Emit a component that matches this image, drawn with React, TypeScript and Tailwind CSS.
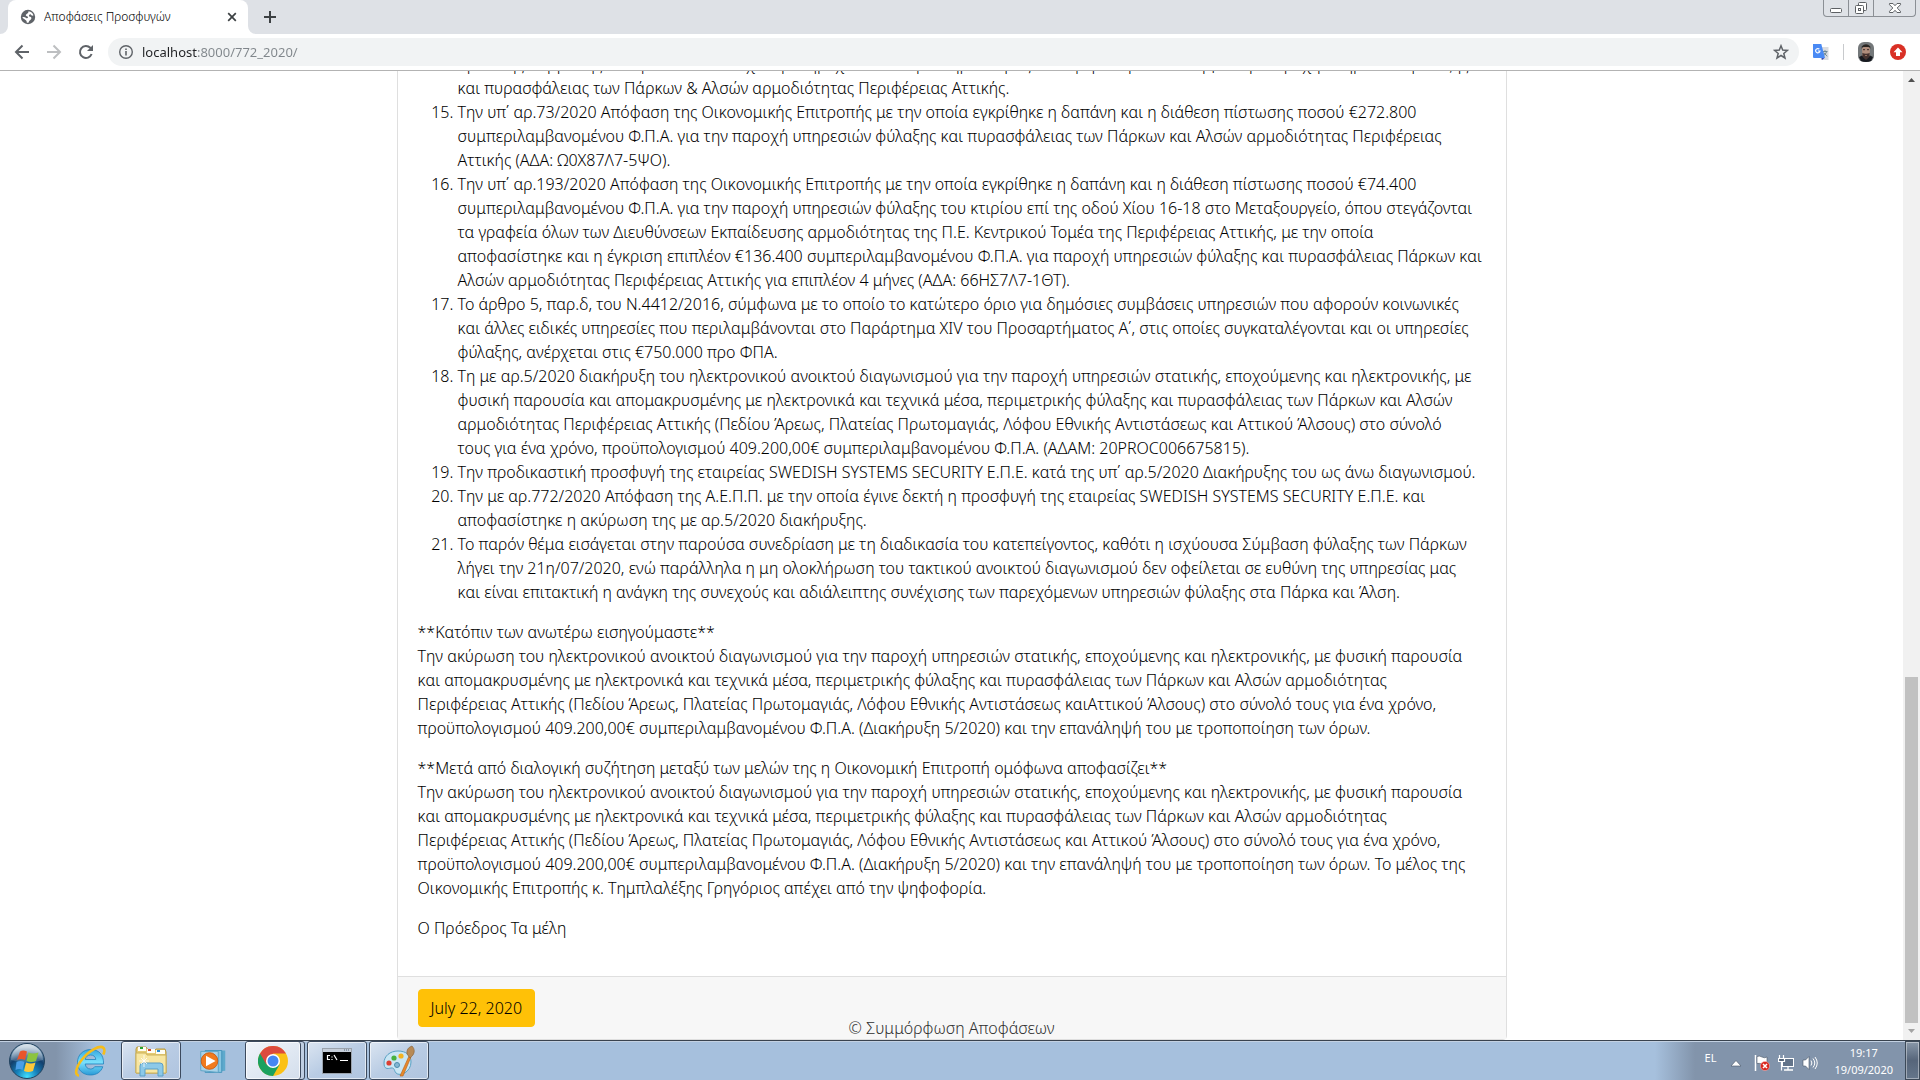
import type { ReactNode } from 'react';

const items: { n: number; text: string }[] = [
  {
    n: 14,
    text: 'όρων της σύμβασης των φυλάκων που έχει προκηρυχθεί από την υπηρεσία μας και αφορά την ανάθεση για την παροχή υπηρεσιών φύλαξης\nκαι πυρασφάλειας των Πάρκων & Αλσών αρμοδιότητας Περιφέρειας Αττικής.',
  },
  {
    n: 15,
    text: 'Την υπ΄ αρ.73/2020 Απόφαση της Οικονομικής Επιτροπής με την οποία εγκρίθηκε η δαπάνη και η διάθεση πίστωσης ποσού €272.800\nσυμπεριλαμβανομένου Φ.Π.Α. για την παροχή υπηρεσιών φύλαξης και πυρασφάλειας των Πάρκων και Αλσών αρμοδιότητας Περιφέρειας\nΑττικής (ΑΔΑ: Ω0Χ87Λ7-5ΨΟ).',
  },
  {
    n: 16,
    text: 'Την υπ΄ αρ.193/2020 Απόφαση της Οικονομικής Επιτροπής με την οποία εγκρίθηκε η δαπάνη και η διάθεση πίστωσης ποσού €74.400\nσυμπεριλαμβανομένου Φ.Π.Α. για την παροχή υπηρεσιών φύλαξης του κτιρίου επί της οδού Χίου 16-18 στο Μεταξουργείο, όπου στεγάζονται\nτα γραφεία όλων των Διευθύνσεων Εκπαίδευσης αρμοδιότητας της Π.Ε. Κεντρικού Τομέα της Περιφέρειας Αττικής, με την οποία\nαποφασίστηκε και η έγκριση επιπλέον €136.400 συμπεριλαμβανομένου Φ.Π.Α. για παροχή υπηρεσιών φύλαξης και πυρασφάλειας Πάρκων και\nΑλσών αρμοδιότητας Περιφέρειας Αττικής για επιπλέον 4 μήνες (ΑΔΑ: 66ΗΣ7Λ7-1ΘΤ).',
  },
  {
    n: 17,
    text: 'Το άρθρο 5, παρ.δ, του Ν.4412/2016, σύμφωνα με το οποίο το κατώτερο όριο για δημόσιες συμβάσεις υπηρεσιών που αφορούν κοινωνικές\nκαι άλλες ειδικές υπηρεσίες που περιλαμβάνονται στο Παράρτημα XIV του Προσαρτήματος Α΄, στις οποίες συγκαταλέγονται και οι υπηρεσίες\nφύλαξης, ανέρχεται στις €750.000 προ ΦΠΑ.',
  },
  {
    n: 18,
    text: 'Τη με αρ.5/2020 διακήρυξη του ηλεκτρονικού ανοικτού διαγωνισμού για την παροχή υπηρεσιών στατικής, εποχούμενης και ηλεκτρονικής, με\nφυσική παρουσία και απομακρυσμένης με ηλεκτρονικά και τεχνικά μέσα, περιμετρικής φύλαξης και πυρασφάλειας των Πάρκων και Αλσών\nαρμοδιότητας Περιφέρειας Αττικής (Πεδίου Άρεως, Πλατείας Πρωτομαγιάς, Λόφου Εθνικής Αντιστάσεως και Αττικού Άλσους) στο σύνολό\nτους για ένα χρόνο, προϋπολογισμού 409.200,00€ συμπεριλαμβανομένου Φ.Π.Α. (ΑΔΑΜ: 20PROC006675815).',
  },
  {
    n: 19,
    text: 'Την προδικαστική προσφυγή της εταιρείας SWEDISH SYSTEMS SECURITY Ε.Π.Ε. κατά της υπ΄ αρ.5/2020 Διακήρυξης του ως άνω διαγωνισμού.',
  },
  {
    n: 20,
    text: 'Την με αρ.772/2020 Απόφαση της Α.Ε.Π.Π. με την οποία έγινε δεκτή η προσφυγή της εταιρείας SWEDISH SYSTEMS SECURITY Ε.Π.Ε. και\nαποφασίστηκε η ακύρωση της με αρ.5/2020 διακήρυξης.',
  },
  {
    n: 21,
    text: 'Το παρόν θέμα εισάγεται στην παρούσα συνεδρίαση με τη διαδικασία του κατεπείγοντος, καθότι η ισχύουσα Σύμβαση φύλαξης των Πάρκων\nλήγει την 21η/07/2020, ενώ παράλληλα η μη ολοκλήρωση του τακτικού ανοικτού διαγωνισμού δεν οφείλεται σε ευθύνη της υπηρεσίας μας\nκαι είναι επιτακτική η ανάγκη της συνεχούς και αδιάλειπτης συνέχισης των παρεχόμενων υπηρεσιών φύλαξης στα Πάρκα και Άλση.',
  },
];

const paragraphs: string[] = [
  '**Κατόπιν των ανωτέρω εισηγούμαστε**\nΤην ακύρωση του ηλεκτρονικού ανοικτού διαγωνισμού για την παροχή υπηρεσιών στατικής, εποχούμενης και ηλεκτρονικής, με φυσική παρουσία\nκαι απομακρυσμένης με ηλεκτρονικά και τεχνικά μέσα, περιμετρικής φύλαξης και πυρασφάλειας των Πάρκων και Αλσών αρμοδιότητας\nΠεριφέρειας Αττικής (Πεδίου Άρεως, Πλατείας Πρωτομαγιάς, Λόφου Εθνικής Αντιστάσεως καιΑττικού Άλσους) στο σύνολό τους για ένα χρόνο,\nπροϋπολογισμού 409.200,00€ συμπεριλαμβανομένου Φ.Π.Α. (Διακήρυξη 5/2020) και την επανάληψή του με τροποποίηση των όρων.',
  '**Μετά από διαλογική συζήτηση μεταξύ των μελών της η Οικονομική Επιτροπή ομόφωνα αποφασίζει**\nΤην ακύρωση του ηλεκτρονικού ανοικτού διαγωνισμού για την παροχή υπηρεσιών στατικής, εποχούμενης και ηλεκτρονικής, με φυσική παρουσία\nκαι απομακρυσμένης με ηλεκτρονικά και τεχνικά μέσα, περιμετρικής φύλαξης και πυρασφάλειας των Πάρκων και Αλσών αρμοδιότητας\nΠεριφέρειας Αττικής (Πεδίου Άρεως, Πλατείας Πρωτομαγιάς, Λόφου Εθνικής Αντιστάσεως και Αττικού Άλσους) στο σύνολό τους για ένα χρόνο,\nπροϋπολογισμού 409.200,00€ συμπεριλαμβανομένου Φ.Π.Α. (Διακήρυξη 5/2020) και την επανάληψή του με τροποποίηση των όρων. Το μέλος της\nΟικονομικής Επιτροπής κ. Τημπλαλέξης Γρηγόριος απέχει από την ψηφοφορία.',
  'Ο Πρόεδρος Τα μέλη',
];

function TabStrip() {
  return (
    <div className="flex h-[34px] shrink-0 items-start justify-between bg-[#dee1e6]">
      <div className="flex h-full items-center">
        <svg className="h-2 w-2 self-end" viewBox="0 0 8 8" aria-hidden="true">
          <path d="M8 0v8H0a8 8 0 0 0 8-8z" fill="#fff" />
        </svg>
        <div className="flex h-full w-60 items-center rounded-t-lg bg-white pr-2 pl-3">
          <svg className="h-4 w-4 shrink-0" viewBox="0 0 16 16" aria-hidden="true">
            <circle cx="8" cy="8" r="7.2" fill="#5f6368" />
            <path d="M8.500 2.300c2.500.2 4.300 1.700 5 4-.9.900-2.200.3-2.600-.5-.4-.7-1.200-.5-1.700.1-.6.8-.1 1.600.8 1.800 1.500.2 1.800 1.500 1 2.600-.8 1.200-2 1.100-2.300 3-.1.600-1.200.6-2 .3.100-1.300-.2-2.200-1.200-2.700C4.200 10.300 3 9.600 2.300 8.300c1.200-.4 2.700-.3 3.500.4.900.8 2 .6 2.200-.3.200-1-.8-1-1.700-1.500-.9-.6-.5-1.500.4-2 .9-.4 1.900-1.300 1.800-2.600z" fill="#fff" />
          </svg>
          <h1 className="ml-2 grow truncate text-xs font-light text-black">Αποφάσεις Προσφυγών</h1>
          <button type="button" aria-label="Close tab" className="grid h-4 w-4 place-items-center">
            <svg className="h-2.5 w-2.5" viewBox="0 0 10 10" aria-hidden="true">
              <path d="M1.200 1.200l7.600 7.600M8.800 1.200L1.200 8.800" stroke="#3c4043" strokeWidth="1.700" />
            </svg>
          </button>
        </div>
        <svg className="h-2 w-2 self-end" viewBox="0 0 8 8" aria-hidden="true">
          <path d="M0 0v8h8a8 8 0 0 1-8-8z" fill="#fff" />
        </svg>
        <button type="button" aria-label="New tab" className="ml-1.5 grid h-4 w-4 place-items-center">
          <svg className="h-3 w-3" viewBox="0 0 12 12" aria-hidden="true">
            <path d="M6 0v12M0 6h12" stroke="#3c4043" strokeWidth="2" />
          </svg>
        </button>
      </div>
      <div className="mr-1 flex h-[17px] divide-x divide-[#8b8f95] rounded-b border border-t-0 border-[#8b8f95] bg-[#dfe2e7]">
        <button type="button" aria-label="Minimize" className="grid w-[25px] place-items-center">
          <svg className="h-4 w-4" viewBox="0 0 16 16" aria-hidden="true">
            <rect x="2.500" y="8.500" width="11" height="4" rx="1" fill="#fff" stroke="#5d6064" />
          </svg>
        </button>
        <button type="button" aria-label="Restore" className="grid w-[25px] place-items-center">
          <svg className="h-4 w-4" viewBox="0 0 16 16" fill="#fff" stroke="#5d6064" aria-hidden="true">
            <rect x="5.500" y="2.500" width="8" height="8" rx="1" />
            <rect x="2.500" y="5.500" width="8" height="8" rx="1" />
            <rect x="5.500" y="8.500" width="2" height="2" />
          </svg>
        </button>
        <button type="button" aria-label="Close" className="grid w-[41px] place-items-center">
          <svg className="h-4 w-4" viewBox="0 0 16 16" aria-hidden="true">
            <path d="M2.500 3.500h3.500l2 2.200 2-2.200h3.500v1.200L10.200 8l3.300 3.300v1.200H10l-2-2.200-2 2.200H2.500v-1.200L5.800 8 2.500 4.700z" fill="#fff" stroke="#5d6064" />
          </svg>
        </button>
      </div>
    </div>
  );
}

function ToolButton({ label, children }: { label: string; children: ReactNode }) {
  return (
    <button type="button" aria-label={label} className="grid h-4 w-4 shrink-0 place-items-center">
      {children}
    </button>
  );
}

function Toolbar() {
  return (
    <div className="flex h-[37px] shrink-0 items-center border-b border-[#b3b3b3] bg-white px-3.5">
      <div className="flex gap-4">
        <ToolButton label="Back">
          <svg className="h-4 w-4" viewBox="0 0 16 16" fill="none" stroke="#5f6368" strokeWidth="2" aria-hidden="true">
            <path d="M15 8H2.500M8.500 1.500L2 8l6.500 6.500" />
          </svg>
        </ToolButton>
        <ToolButton label="Forward">
          <svg className="h-4 w-4" viewBox="0 0 16 16" fill="none" stroke="#bdbfc1" strokeWidth="2" aria-hidden="true">
            <path d="M1 8h12.500M7.500 1.500L14 8l-6.500 6.500" />
          </svg>
        </ToolButton>
        <ToolButton label="Reload">
          <svg className="h-4 w-4" viewBox="0 0 16 16" aria-hidden="true">
            <path d="M13.600 10A6 6 0 1 1 12.300 3.800L14 5.500" fill="none" stroke="#5f6368" strokeWidth="2" />
            <path d="M15 1v6H9z" fill="#5f6368" />
          </svg>
        </ToolButton>
      </div>
      <div className="ml-3.5 flex h-7 grow items-center rounded-full bg-[#f1f3f4] px-2.5">
        <ToolButton label="Site information">
          <svg className="h-4 w-4" viewBox="0 0 16 16" aria-hidden="true">
            <circle cx="8" cy="8" r="6.300" fill="none" stroke="#5f6368" strokeWidth="1.400" />
            <path d="M7.200 7h1.600v4.500H7.200zM7.200 4.500h1.600V6H7.200z" fill="#5f6368" />
          </svg>
        </ToolButton>
        <input
          type="text"
          aria-label="Address"
          defaultValue="localhost:8000/772_2020/"
          className="ml-2 min-w-0 grow bg-[linear-gradient(to_right,#202124_55px,#80868b_55px)] bg-clip-text text-[13px] leading-5 text-transparent outline-none"
        />
        <ToolButton label="Bookmark this page">
          <svg className="h-4 w-4" viewBox="0 0 16 16" aria-hidden="true">
            <path d="M8 1.800l1.700 4.300 4.700.3-3.600 3 1.200 4.600L8 11.500 4 14l1.200-4.600-3.600-3 4.700-.3z" fill="none" stroke="#5f6368" strokeWidth="1.500" />
          </svg>
        </ToolButton>
      </div>
      <div className="ml-3.5 flex items-center">
        <ToolButton label="Translate">
          <svg className="h-4 w-4" viewBox="0 0 16 16" aria-hidden="true">
            <path d="M6 3h9.500v13H8z" fill="#dadce0" />
            <path d="M9.500 7.500h5M12 6.200v1.300M13.500 7.700c-.5 2-2 3.300-3.300 4M10.700 8.500l3.500 3.800" stroke="#6e8a96" fill="none" />
            <path d="M8.500 14h3L9 16z" fill="#3747b5" />
            <path d="M0 0h8.300L12 14H1a1 1 0 0 1-1-1z" fill="#4a8af4" />
            <path d="M6.400 5.200A2.200 2.200 0 1 0 7 7H4.900" fill="none" stroke="#fff" strokeWidth="1.200" />
          </svg>
        </ToolButton>
        <div className="mx-3.5 h-4 w-px bg-[#c8cacd]" />
        <button type="button" aria-label="Profile" className="h-5 w-4">
          <svg className="h-5 w-4" viewBox="0 0 16 20" aria-hidden="true">
            <rect width="16" height="20" rx="6" fill="#74787a" />
            <path d="M1 15l4-2h6l4 2-2 4q-5 2-10 0z" fill="#171a20" />
            <path d="M4 6q4-3 8 0l-.5 8L8 17l-3.500-3z" fill="#b08d7c" />
            <path d="M3.700 7V4.500Q8 0 12.300 4.500V7l-1-2h-6.600z" fill="#292522" />
            <path d="M4.300 11q3.700 1.500 7.400 0l-.5 4L8 18l-3.200-3z" fill="#45322f" />
            <path d="M5 7.700h2M9 7.700h2" stroke="#382b28" />
            <path d="M7 13.500h2" stroke="#96705f" />
          </svg>
        </button>
        <button type="button" aria-label="Update available" className="ml-4 h-4 w-4">
          <svg className="h-4 w-4" viewBox="0 0 16 16" aria-hidden="true">
            <circle cx="8" cy="8" r="8" fill="#d93025" />
            <path d="M8 3.500l4.500 4.700H10V12H6V8.200H3.500z" fill="#fff" />
          </svg>
        </button>
      </div>
    </div>
  );
}

function Scrollbar() {
  return (
    <div className="flex w-[17px] shrink-0 flex-col items-center bg-[#f1f1f1]">
      <svg className="h-[17px] w-[17px] shrink-0" viewBox="0 0 17 17" aria-hidden="true">
        <path d="M5 11h7L8.500 7z" fill="#505050" />
      </svg>
      <div className="flex w-[13px] grow flex-col justify-end">
        <div className="h-[37%] bg-[#c1c1c1]" />
      </div>
      <svg className="h-[17px] w-[17px] shrink-0" viewBox="0 0 17 17" aria-hidden="true">
        <path d="M5 6h7l-3.500 4z" fill="#a3a3a3" />
      </svg>
    </div>
  );
}

function Page() {
  return (
    <div className="relative flex min-w-0 grow flex-col justify-end overflow-hidden">
      <article className="mx-auto w-full max-w-[1110px] rounded-b border border-[#dfdfdf] bg-white text-base leading-6 font-light text-black">
        <div className="p-5">
          <ol className="mb-4 list-decimal pl-10">
            {items.map((item) => (
              <li key={item.n} value={item.n} className="whitespace-pre-line">
                {item.text}
              </li>
            ))}
          </ol>
          {paragraphs.map((text) => (
            <p key={text} className="mb-4 whitespace-pre-line">
              {text}
            </p>
          ))}
        </div>
        <div className="border-t border-[#dfdfdf] bg-[#f7f7f7] px-5 py-3">
          <a href="#date" className="inline-block rounded border border-[#ffc107] bg-[#ffc107] px-3 py-1.5 align-top">
            July 22, 2020
          </a>
        </div>
      </article>
      <footer className="absolute inset-x-0 bottom-0 text-center leading-6 font-light text-[#303030]">
        © Συμμόρφωση Αποφάσεων
      </footer>
    </div>
  );
}

function TaskButton({ label, active, children }: { label: string; active?: boolean; children: ReactNode }) {
  return (
    <button
      type="button"
      aria-label={label}
      className={
        active
          ? 'grid h-full w-[55px] place-items-center rounded-[3px] border-r border-[#3c4a5e] bg-linear-to-br from-[#f0f4fa] to-[#d3deec] inset-ring inset-ring-white/70'
          : 'grid h-full w-[60px] place-items-center rounded-[3px] border border-[#3c4a5e] bg-linear-to-br from-[#dbe5f1] via-[#b9cce4] to-[#afc4df] inset-ring inset-ring-white/60'
      }
    >
      {children}
    </button>
  );
}

function Taskbar() {
  return (
    <div className="flex h-10 shrink-0 border-t border-[#39434f] bg-[linear-gradient(to_right,#8294ab_56px,#a6c0dd_96px,#a6c0dd_calc(100%-265px),#8294ab_calc(100%-225px))] inset-shadow-[0_1px_0_#c3d1e2]">
      <button type="button" aria-label="Start" className="ml-2 h-full w-[38px]">
        <svg className="h-[38px] w-[38px]" viewBox="0 0 38 38" aria-hidden="true">
          <defs>
            <radialGradient id="orb" cx="50%" cy="95%" r="85%">
              <stop offset="0" stopColor="#41e0ff" />
              <stop offset=".35" stopColor="#1682bb" />
              <stop offset=".7" stopColor="#123f6d" />
              <stop offset="1" stopColor="#6e94b3" />
            </radialGradient>
            <linearGradient id="orbShine" x1="0" y1="0" x2="0" y2="1">
              <stop offset="0" stopColor="#fff" stopOpacity=".75" />
              <stop offset="1" stopColor="#fff" stopOpacity=".12" />
            </linearGradient>
          </defs>
          <circle cx="19" cy="19" r="17.500" fill="url(#orb)" stroke="#22435f" />
          <path d="M3 18a16 16 0 0 1 32 0q-16 5-32 0z" fill="url(#orbShine)" />
          <path d="M12 9.500q3-2 7 0l-2 8.500q-4-2-8 0z" fill="#e9552b" />
          <path d="M20.500 10.500q4 2 10 0l-2.500 8.500q-5 2-9.500 0z" fill="#8cc43f" />
          <path d="M8.500 20q4-2 8 0l-2 8q-3-2-7 0z" fill="#4a9ee8" />
          <path d="M18 20.500q5 2 9.500 0l-2.500 8.500q-5 2-9 0z" fill="#fcc83a" />
        </svg>
      </button>
      <div className="flex">
        <button type="button" aria-label="Internet Explorer" className="ml-3 grid w-[63px] place-items-center">
          <svg className="h-8 w-8" viewBox="0 0 32 32" aria-hidden="true">
            <defs>
              <linearGradient id="ie" x1="0" y1="0" x2="0" y2="1">
                <stop offset="0" stopColor="#36a7e0" />
                <stop offset=".5" stopColor="#7be0fb" />
                <stop offset="1" stopColor="#2a9bd8" />
              </linearGradient>
            </defs>
            <path d="M29.500 19H11.200c.3 3 2.300 5 5.300 5 2 0 3.400-.9 4.200-2.300h8.100C27 27 22.500 30 16.500 30 8.800 30 3.500 25 3.500 17.500S9 4.500 16.800 4.500 30 9.500 29.500 19zM11.300 14.500h10.500c-.2-2.800-2.200-4.500-5.200-4.500s-5 1.700-5.300 4.500z" fill="url(#ie)" stroke="#2182bd" strokeWidth=".8" />
            <path d="M5 30.500C0 30.500 2 22 8 14.500 15 5.500 26-.5 29.500 3c1.300 1.400 1 4-.2 6.500" fill="none" stroke="#f5bd1b" strokeWidth="2.600" />
          </svg>
        </button>
        <TaskButton label="Windows Explorer">
          <svg className="h-8 w-8" viewBox="0 0 32 32" aria-hidden="true">
            <path d="M1 4l1-2h9l2 3h7l1-1h9l1 3v21H1z" fill="#e5cb74" stroke="#b99b43" />
            <path d="M3 2h8v4H3zM12 4h8v4h-8zM21 5h9v4h-9z" fill="#fffdf2" />
            <path d="M5 2h3v2H5z" fill="#27a32f" />
            <path d="M13 4h3v2h-3z" fill="#d14a2d" />
            <path d="M22 5h3v2h-3z" fill="#298ad0" />
            <path d="M1 8h10l1 2h19v18H1z" fill="#f7e6a2" stroke="#cdb25b" />
            <path d="M5 31V21q0-3 3-3h17q3 0 3 3v10h-5v-7H10v7z" fill="#8cc9e8" stroke="#5b9fc7" />
            <path d="M9 10v12M4 16h10M6 13l6 6M12 13l-6 6" stroke="#fff" strokeWidth=".8" />
          </svg>
        </TaskButton>
        <button type="button" aria-label="Windows Media Player" className="grid w-16 place-items-center">
          <svg className="h-7 w-7" viewBox="0 0 32 32" aria-hidden="true">
            <path d="M11 4h19v23l-19 2z" fill="#5ea9cc" />
            <path d="M7 4h19v25H7z" fill="#89c6e1" stroke="#3f8fb8" />
            <path d="M2 5h20v24L2 27z" fill="#a9d3e8" stroke="#579fc2" />
            <circle cx="12" cy="16" r="9.500" fill="#f17b1d" stroke="#c95a10" />
            <path d="M8 10l11 6-11 6z" fill="#fff" />
          </svg>
        </button>
        <div className="flex gap-0.5">
          <div className="flex h-full w-[60px] rounded-[3px] border border-[#3c4a5e] bg-[#bfcfe3]">
            <TaskButton label="Google Chrome" active>
              <svg className="h-[30px] w-[30px]" viewBox="0 0 30 30" aria-hidden="true">
                <circle cx="15" cy="15" r="15" fill="#fbc116" />
                <path d="M15 15L2 7.500A15 15 0 0 0 15 30l6.500-11.200z" fill="#1ba15f" />
                <path d="M28 7.500A15 15 0 0 0 2 7.500l6.500 11.200L15 7.500z" fill="#dc4a3d" />
                <circle cx="15" cy="15" r="7" fill="#fff" />
                <circle cx="15" cy="15" r="5.500" fill="#4587f3" />
              </svg>
            </TaskButton>
          </div>
          <TaskButton label="Command Prompt">
            <svg className="h-[26px] w-[30px]" viewBox="0 0 30 26" aria-hidden="true">
              <rect x=".5" y=".5" width="29" height="25" fill="#000" stroke="#9ba3ad" />
              <path d="M1 1h28v3H1z" fill="#c6ced9" />
              <path d="M22 2h1M24 2h1M26 2h1" stroke="#4f6378" />
              <path d="M8 7.500H5.500v4H8M10 8.500v1M10 11v1M12 7l3 5M18 12.500h8" fill="none" stroke="#fff" strokeWidth="1.200" />
            </svg>
          </TaskButton>
          <TaskButton label="Paint">
            <svg className="h-8 w-8" viewBox="0 0 32 32" aria-hidden="true">
              <path d="M15 6C7 6 1 11 1 18c0 6 3 6 7 5 4-.5 3 3 5 5 4 4 15-1 15-11C28 10 23 6 15 6z" fill="#c9e6f4" stroke="#5aa2c4" />
              <circle cx="6" cy="18" r="2.600" fill="#dc3f32" />
              <circle cx="11" cy="13" r="2.600" fill="#47b13e" />
              <circle cx="18" cy="11" r="2.600" fill="#f3b320" />
              <circle cx="14" cy="20" r="2.500" fill="#83b7d3" stroke="#4c8dad" />
              <path d="M17 31l9-20 2 1-8 19z" fill="#e8892b" stroke="#b3611a" strokeWidth=".6" />
              <path d="M24 9q-1-6 5-8 4 4 1 9l-3 3z" fill="#b88a55" stroke="#876036" strokeWidth=".6" />
            </svg>
          </TaskButton>
        </div>
      </div>
      <div className="ml-auto flex items-center text-[11px] leading-[17px] text-white">
        <span className="mb-1.5">EL</span>
        <div className="ml-3.5 flex items-center gap-2 pt-1">
          <svg className="h-4 w-3" viewBox="0 0 12 16" aria-hidden="true">
            <path d="M1 11h10L6 5.500z" fill="#fff" stroke="#455264" strokeWidth=".6" />
          </svg>
          <svg className="ml-1 h-4 w-4" viewBox="0 0 16 16" aria-hidden="true">
            <path d="M1.500 0v16" stroke="#fff" strokeWidth="1.500" />
            <path d="M3 1.500q2.500-1 5 .5t5 0v7q-2.500 1-5 0t-5-.5z" fill="#fff" stroke="#4a5666" strokeWidth=".6" />
            <circle cx="11" cy="11" r="4.600" fill="#d9281f" stroke="#fbb" strokeWidth=".5" />
            <path d="M9 9l4 4M13 9l-4 4" stroke="#fff" strokeWidth="1.500" />
          </svg>
          <svg className="h-4 w-4" viewBox="0 0 16 16" aria-hidden="true">
            <rect x="4.500" y="3.500" width="11" height="8" fill="#63748a" stroke="#fff" />
            <path d="M10 12v3M6 15h9" stroke="#fff" strokeWidth="1.300" />
            <path d="M1.500 0v4M5.500 0v4M.5 3.500h6v3h-6zM3.500 6v9.500" stroke="#fff" strokeWidth="1.200" fill="#56667a" />
          </svg>
          <svg className="h-4 w-4" viewBox="0 0 16 16" aria-hidden="true">
            <path d="M1 5h2.500L7 1.500v13L3.500 11H1z" fill="#fff" stroke="#465466" strokeWidth=".6" />
            <path d="M9 5.500q1.800 2.500 0 5M11 3.500q3.500 4.500 0 9M13 2q4.500 6 0 12" fill="none" stroke="#fff" />
          </svg>
        </div>
        <time dateTime="2020-09-19T19:17" className="ml-4 text-center">
          19:17
          <br />
          19/09/2020
        </time>
        <button type="button" aria-label="Show desktop" className="ml-3 h-full w-[15px] border border-[#3c4958] bg-linear-to-b from-[#8998a9] via-[#56657a] to-[#65768b] inset-ring inset-ring-white/40" />
      </div>
    </div>
  );
}

export default function App() {
  return (
    <div className="flex h-screen flex-col overflow-hidden bg-white font-['Noto_Sans',sans-serif]">
      <TabStrip />
      <Toolbar />
      <main className="flex min-h-0 grow">
        <Page />
        <Scrollbar />
      </main>
      <Taskbar />
    </div>
  );
}
